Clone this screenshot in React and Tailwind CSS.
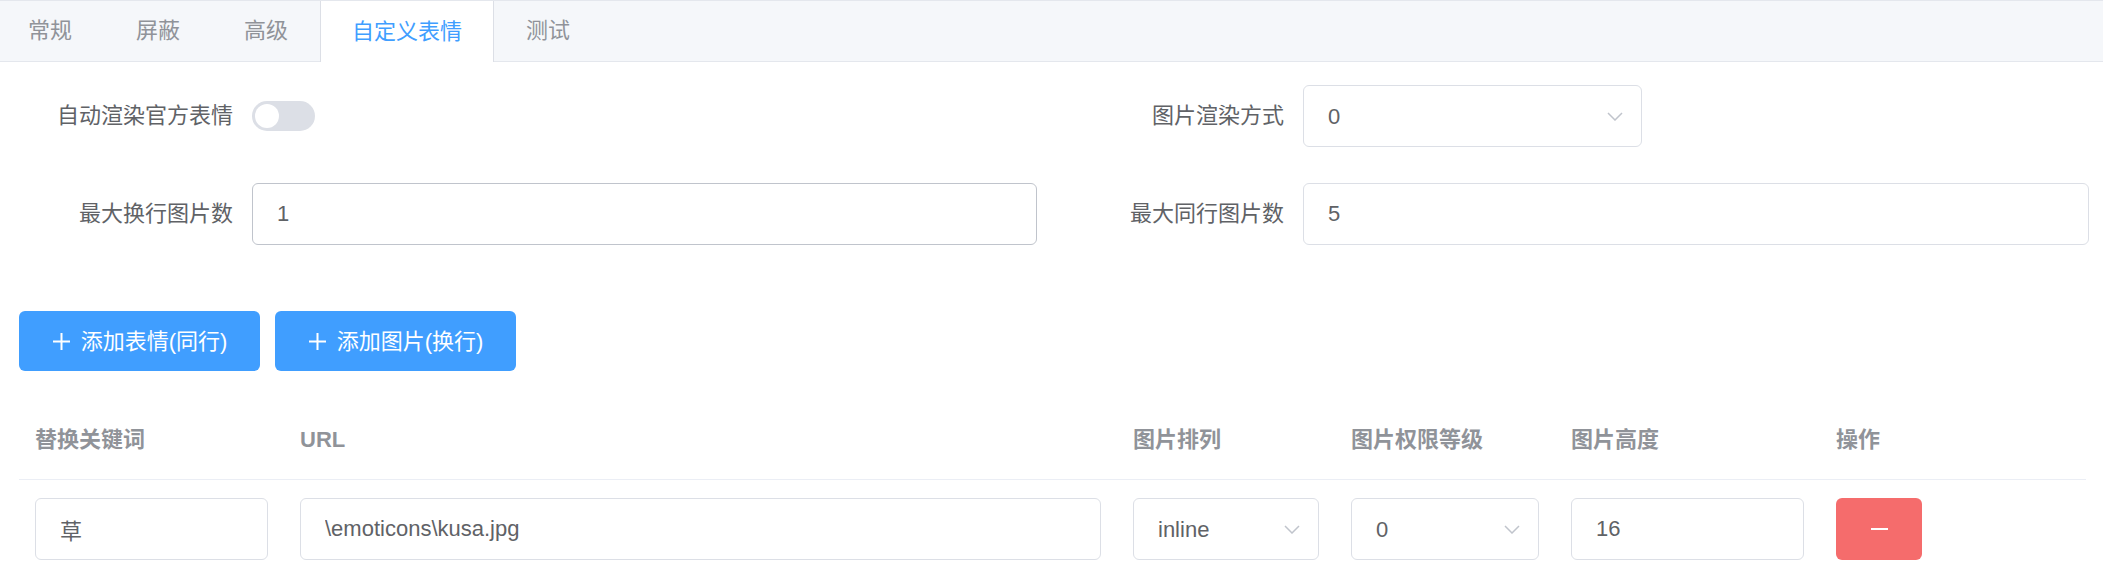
import React from "react";

const tabs = ["常规", "屏蔽", "高级", "自定义表情", "测试"];
const ACTIVE = 3;

const Chevron = () => (
  <svg width="16" height="9" viewBox="0 0 16 9" fill="none">
    <polyline points="1,1 8,8 15,1" stroke="#c0c4cc" strokeWidth="1.5" />
  </svg>
);

const Plus = () => (
  <svg width="19" height="19" viewBox="0 0 19 19">
    <path d="M9.5 1v17M1 9.5h17" stroke="#fff" strokeWidth="2" />
  </svg>
);

const Field = ({ label, children }) => (
  <div className="flex items-center h-[62px] pr-[14px]">
    <label className="w-[252px] shrink-0 pr-[19px] text-right leading-[30px]">
      {label}
    </label>
    <div className="flex-1 flex items-center">{children}</div>
  </div>
);

const TextBox = ({ value, hover }) => (
  <input
    defaultValue={value}
    className={`w-full h-[62px] px-[24px] rounded-[6px] border bg-white outline-none text-[22px] text-[#606266] ${
      hover ? "border-[#c0c4cc]" : "border-[#dcdfe6]"
    }`}
  />
);

const SelectBox = ({ value, className = "w-full" }) => (
  <div
    className={`${className} h-[62px] pl-[24px] pr-[18px] rounded-[6px] border border-[#dcdfe6] bg-white flex items-center justify-between`}
  >
    <span>{value}</span>
    <Chevron />
  </div>
);

const cols = "grid grid-cols-[265px_1fr_218px_220px_265px_266px]";

const App = () => {
  return (
    <div className="min-h-screen bg-white font-['Liberation_Sans','Noto_Sans_CJK_SC',sans-serif] text-[22px] text-[#606266]">
      {/* tabs */}
      <div className="flex items-start h-[62px] border-y border-[#e4e7ed] bg-[#f5f7fa]">
        {tabs.map((t, i) => (
          <div
            key={t}
            className={`flex items-center px-[31px] border-x leading-[30px] ${
              i === 0 ? "pl-[27px]" : ""
            } ${
              i === ACTIVE
                ? "h-[61px] bg-white border-[#dcdfe6] text-[#409eff]"
                : "h-[60px] border-transparent text-[#909399]"
            }`}
          >
            {t}
          </div>
        ))}
      </div>

      {/* form */}
      <div className="pt-[23px]">
        <div className="grid grid-cols-[1051px_1fr]">
          <Field label="自动渲染官方表情">
            <div className="w-[63px] h-[30px] rounded-full bg-[#dcdfe6] flex items-center">
              <div className="w-[24px] h-[24px] ml-[3px] rounded-full bg-white" />
            </div>
          </Field>
          <Field label="图片渲染方式">
            <SelectBox value="0" className="w-[339px]" />
          </Field>
        </div>
        <div className="grid grid-cols-[1051px_1fr] mt-[36px]">
          <Field label="最大换行图片数">
            <TextBox value="1" hover />
          </Field>
          <Field label="最大同行图片数">
            <TextBox value="5" />
          </Field>
        </div>

        {/* buttons */}
        <div className="flex gap-[15px] pl-[19px] mt-[66px]">
          {["添加表情(同行)", "添加图片(换行)"].map((b) => (
            <button
              key={b}
              className="w-[241px] h-[60px] rounded-[6px] bg-[#409eff] text-white flex items-center justify-center gap-[10px]"
            >
              <Plus />
              <span>{b}</span>
            </button>
          ))}
        </div>

        {/* table */}
        <div className="ml-[19px] mr-[17px] mt-[34px]">
          <div className={`${cols} border-b border-[#ebeef5] font-bold text-[#909399]`}>
            {["替换关键词", "URL", "图片排列", "图片权限等级", "图片高度", "操作"].map(
              (h) => (
                <div key={h} className="px-[16px] pt-[18px] pb-[22px] leading-[34px]">
                  {h}
                </div>
              )
            )}
          </div>
          <div className={`${cols} items-center`}>
            <div className="px-[16px] py-[18px]">
              <TextBox value="草" />
            </div>
            <div className="px-[16px] py-[18px]">
              <TextBox value="\emoticons\kusa.jpg" />
            </div>
            <div className="px-[16px] py-[18px]">
              <SelectBox value="inline" />
            </div>
            <div className="px-[16px] py-[18px]">
              <SelectBox value="0" />
            </div>
            <div className="px-[16px] py-[18px]">
              <TextBox value="16" />
            </div>
            <div className="px-[16px] py-[18px]">
              <button className="w-[86px] h-[62px] rounded-[6px] bg-[#f56c6c] flex items-center justify-center">
                <span className="block w-[17px] h-[2px] bg-white" />
              </button>
            </div>
          </div>
        </div>
      </div>
    </div>
  );
};

export default App;
